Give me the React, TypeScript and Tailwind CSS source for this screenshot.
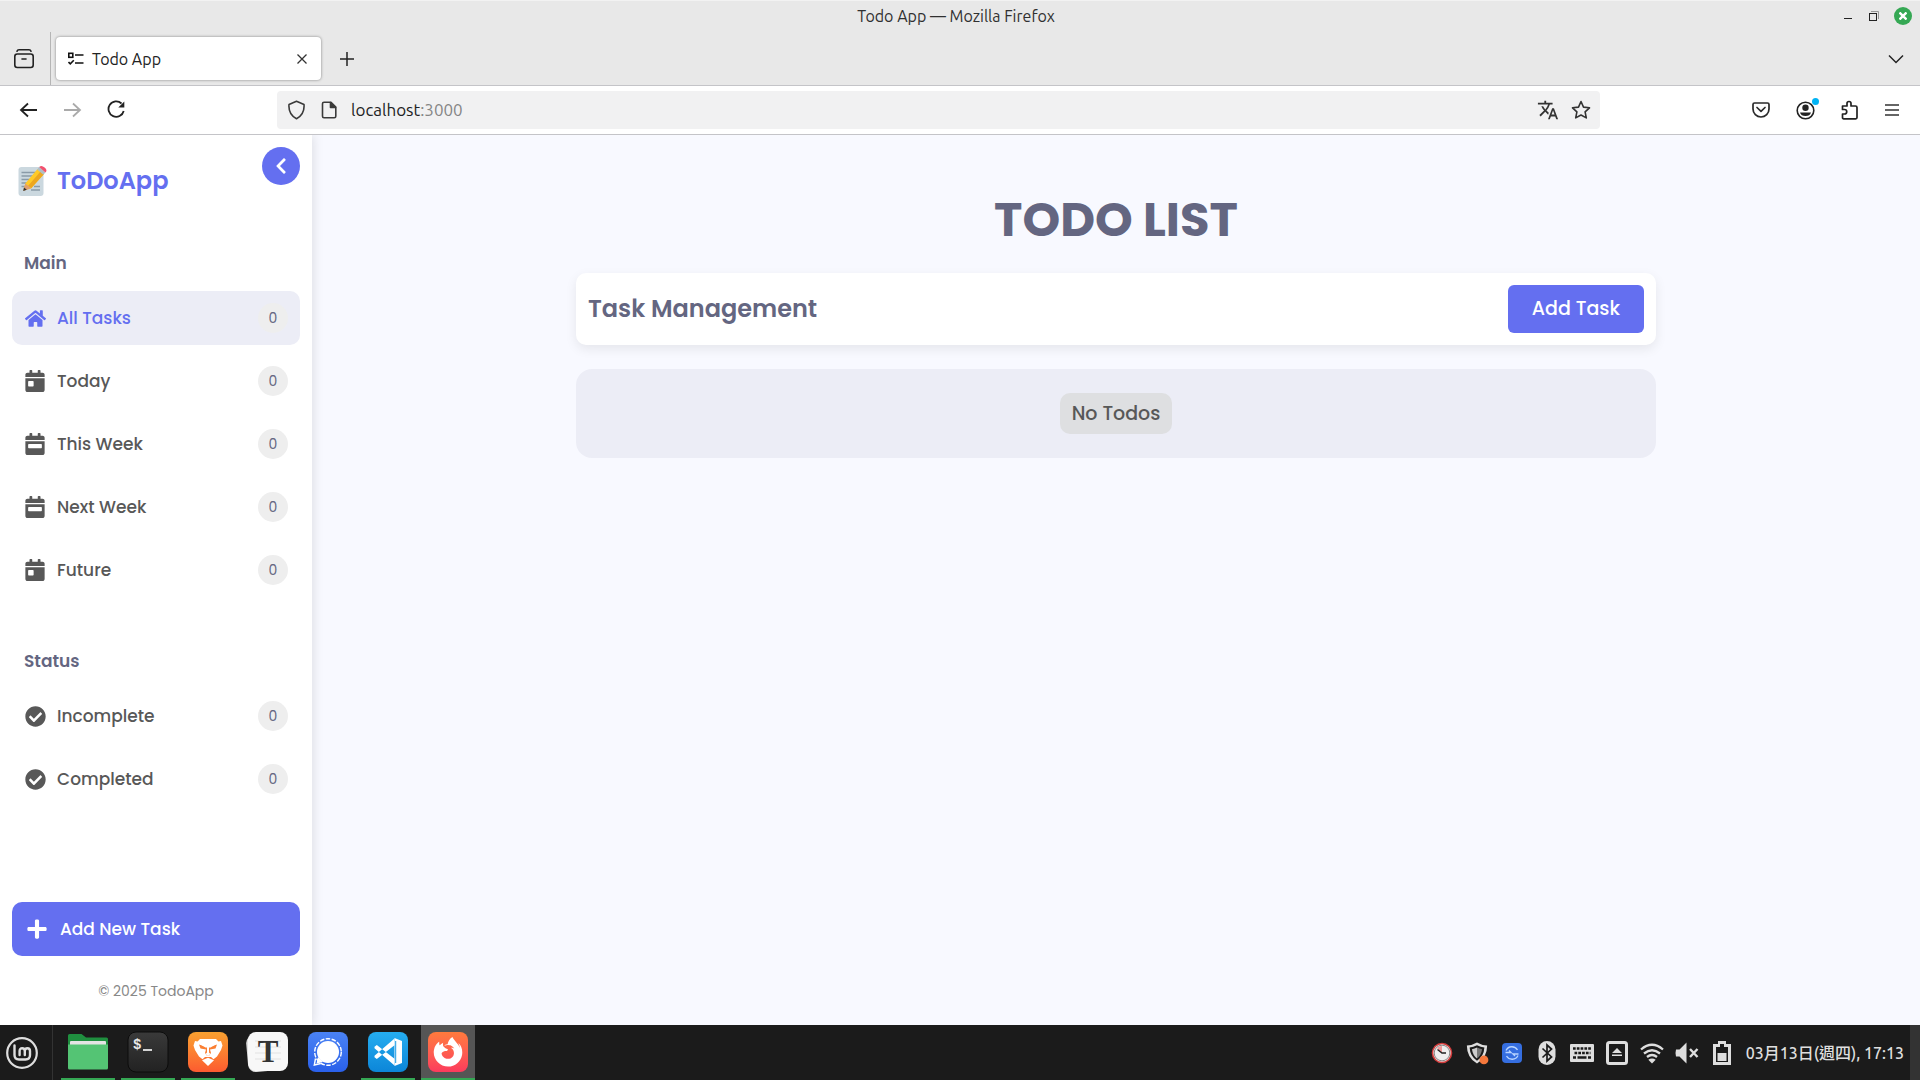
import type { ReactNode } from "react";
import {
  FaCalendarDay,
  FaCalendarWeek,
  FaCheckCircle,
  FaChevronLeft,
  FaFirefoxBrowser,
  FaHome,
  FaPlus,
} from "react-icons/fa";
import { MdTranslate } from "react-icons/md";

/* ---------- window chrome ---------- */

function TitleBar() {
  return (
    <div className="flex h-8 items-center border-t border-[#f2f2f2] bg-[#e8e8e8] pb-[2px] pr-2">
      <div className="flex-1" />
      <h2 className="text-[16px] leading-5 text-[#303030]">Todo App — Mozilla Firefox</h2>
      <div className="flex flex-1 items-center justify-end gap-[14px]">
        <button aria-label="Minimize" className="flex h-4 w-3 items-center justify-center">
          <svg width="10" height="10" className="fill-[#222]">
            <rect x="1" y="7" width="8" height="1" />
          </svg>
        </button>
        <button aria-label="Restore" className="flex h-4 w-3 items-center justify-center">
          <svg width="12" height="12" fill="none">
            <path d="M3 1.5h7.5V9" stroke="#999" />
            <rect x="1.5" y="3.5" width="7" height="7" stroke="#222" />
          </svg>
        </button>
        <button
          aria-label="Close window"
          className="flex size-[18px] items-center justify-center rounded-full bg-[#35a854]"
        >
          <svg width="8" height="8" stroke="#fff" strokeWidth="2.4">
            <path d="M0.5 0.5l7 7M7.5 0.5l-7 7" />
          </svg>
        </button>
      </div>
    </div>
  );
}

function TabStrip() {
  return (
    <div className="flex h-[54px] border-b border-[#c4c4c8] bg-[#e8e8e8]">
      <div className="flex w-[51px] items-center border-r border-[#b5b5b5] pl-[13px]">
        <button aria-label="Recent browsing">
          <svg width="22" height="22" fill="none" stroke="#222" strokeWidth="1.6" strokeLinecap="round">
            <path d="M4 3.2C4.400 2 5 1.800 6 1.800h10c1 0 1.600.2 2 1.400" />
            <rect x="1.800" y="6" width="18.400" height="13.500" rx="2.500" />
            <path d="M9 11h4" />
          </svg>
        </button>
      </div>
      <div className="ml-[5px] mt-[5px] flex h-[43px] w-[265px] items-center rounded bg-white pl-3 pr-[11px] shadow-[0_0_3px_rgba(0,0,0,0.45)]">
        <svg width="16" height="16" fill="none" stroke="#111" strokeWidth="1.600">
          <rect x="0.800" y="2.300" width="4" height="4" />
          <path d="M7 4h8.500M7 12h8.500M0.500 11l1.800 1.800L5.800 9.300" />
        </svg>
        <span className="ml-2 flex-1 text-[16px] leading-5 text-[#222]">Todo App</span>
        <button aria-label="Close tab" className="flex size-4 items-center justify-center">
          <svg width="10" height="10" stroke="#333" strokeWidth="1.300">
            <path d="M0.500 0.500l9 9M9.500 0.500l-9 9" />
          </svg>
        </button>
      </div>
      <button aria-label="New tab" className="ml-[18px] flex items-center">
        <svg width="16" height="16" stroke="#222" strokeWidth="1.500">
          <path d="M8 1v14M1 8h14" />
        </svg>
      </button>
      <button aria-label="List all tabs" className="ml-auto mr-4 flex items-center">
        <svg width="16" height="10" fill="none" stroke="#222" strokeWidth="1.500">
          <path d="M1 1.500l7 7 7-7" />
        </svg>
      </button>
    </div>
  );
}

function Toolbar() {
  return (
    <div className="flex h-[49px] items-center border-b border-[#c4c4c8] bg-white pl-[19px] pr-5">
      <div className="flex w-[258px] items-center gap-6">
        <button aria-label="Back">
          <svg width="20" height="20" fill="none" stroke="#222" strokeWidth="1.800">
            <path d="M18 10H2M9 3.500L2 10l7 6.500" />
          </svg>
        </button>
        <button aria-label="Forward">
          <svg width="20" height="20" fill="none" stroke="#aaa" strokeWidth="1.800">
            <path d="M1 10h16M10 3.500l7 6.500-7 6.500" />
          </svg>
        </button>
        <button aria-label="Reload">
          <svg width="20" height="20" fill="none" stroke="#222" strokeWidth="1.800">
            <path d="M14.500 3.500A7.700 7.700 0 1 0 16.700 11" />
            <path d="M17.300 1.500V7.500h-6z" fill="#222" stroke="none" />
          </svg>
        </button>
      </div>
      <div className="flex h-[38px] flex-1 items-center rounded bg-[#f1f1f2] pl-[10px] pr-[9px]">
        <svg width="18" height="20" fill="none" stroke="#3a3a3a" strokeWidth="1.600" strokeLinejoin="round">
          <path d="M9.500 1.300l7.500 3.200c.5 6-1.500 11-7.500 14.200C3.500 15.500 1.500 10.500 2 4.500z" />
        </svg>
        <svg width="16" height="18" fill="none" stroke="#3a3a3a" strokeWidth="1.600" strokeLinejoin="round" className="ml-4">
          <path d="M3 1.200h7L14.800 6v9.300q0 1.500-1.500 1.500H3q-1.500 0-1.500-1.500V2.700Q1.500 1.200 3 1.200z" />
          <path d="M9.500 1.500v5h5z" fill="#3a3a3a" />
        </svg>
        <label htmlFor="address" className="ml-[14px] flex text-[17px] leading-6 text-[#222]">
          localhost<span className="text-[#858585]">:3000</span>
        </label>
        <input id="address" aria-label="Address" className="h-6 min-w-0 flex-1 bg-transparent text-[17px] outline-none" />
        <button aria-label="Translate page">
          <MdTranslate className="size-[22px] text-[#333]" />
        </button>
        <button aria-label="Bookmark page" className="ml-3">
          <svg width="20" height="20" fill="none" stroke="#333" strokeWidth="1.600" strokeLinejoin="round">
            <path d="M10 1.500l2.500 5.600 6 .7-4.400 4.100 1.200 6L10 15l-5.300 2.900 1.200-6L1.500 7.800l6-.7z" />
          </svg>
        </button>
      </div>
      <div className="ml-[151px] flex items-center gap-[25px]">
        <button aria-label="Save to Pocket">
          <svg width="20" height="20" fill="none" stroke="#2a2a2a" strokeWidth="1.700" strokeLinecap="round" strokeLinejoin="round">
            <path d="M3.500 3h13q1.500 0 1.500 1.500V9a8 8 0 0 1-16 0V4.500Q2 3 3.500 3z" />
            <path d="M6 7.500l4 3.800 4-3.800" />
          </svg>
        </button>
        <button aria-label="Account" className="relative">
          <svg width="20" height="20" fill="none">
            <circle cx="9.500" cy="10.500" r="8.300" stroke="#222" strokeWidth="1.600" />
            <circle cx="9.500" cy="7.800" r="3.200" fill="#222" />
            <path d="M4 12.500h11q-1 3.500-5.500 3.500t-5.500-3.500z" fill="#222" />
          </svg>
          <span className="absolute -right-[3px] -top-[2px] size-[7px] rounded-full bg-[#00b3f4]" />
        </button>
        <button aria-label="Extensions">
          <svg width="18" height="20" fill="none" stroke="#222" strokeWidth="1.700" strokeLinejoin="round">
            <path d="M1.500 6H6V3.500a2 2 0 0 1 4 0V6h4.500Q16 6 16 7.500v10q0 1.300-1.300 1.300H2.800Q1.500 18.800 1.500 17.500V14h2a2 2 0 0 0 0-4.500h-2z" />
          </svg>
        </button>
        <button aria-label="Application menu">
          <svg width="16" height="16" stroke="#333" strokeWidth="1.600">
            <path d="M1 3h14M1 8h14M1 13h14" />
          </svg>
        </button>
      </div>
    </div>
  );
}

/* ---------- todo app ---------- */

function MemoIcon() {
  return (
    <svg width="29" height="32" viewBox="0 0 29 32" aria-hidden="true">
      <rect x="0.500" y="2" width="25" height="29" rx="3" fill="#cbd8df" />
      <path d="M3.500 7.500h15M3.500 11h13M3.500 14.500h10M3.500 18h7M3.500 21.500h4M16 21.500h6M13 25h9" stroke="#8a9ba8" strokeWidth="1.300" />
      <path d="M5.500 25.500l1.800-7L19.500 4l6.300 5.300-12.600 14z" fill="#ffca28" />
      <path d="M22.500 6.500l3.300 2.800-12.600 14-3-2.600z" fill="#eda71f" />
      <path d="M7.300 18.500l5.900 4.800-8 2.700z" fill="#e0a070" />
      <path d="M6 22.500l2.800 2.200-3.600 1.300z" fill="#333" />
      <path d="M19.200 4.400l2-2.300 6.200 5.300-2 2.300z" fill="#b0bec5" />
      <path d="M21.200 2.100q2.200-2.500 5.400.4 3.300 2.700.8 4.900z" fill="#f2516e" />
    </svg>
  );
}

type Item = { label: string; icon: ReactNode; active?: boolean };

const mainItems: Item[] = [
  { label: "All Tasks", icon: <FaHome size={21} />, active: true },
  { label: "Today", icon: <FaCalendarDay size={22} /> },
  { label: "This Week", icon: <FaCalendarWeek size={22} /> },
  { label: "Next Week", icon: <FaCalendarWeek size={22} /> },
  { label: "Future", icon: <FaCalendarDay size={22} /> },
];

const statusItems: Item[] = [
  { label: "Incomplete", icon: <FaCheckCircle size={21} /> },
  { label: "Completed", icon: <FaCheckCircle size={21} /> },
];

function NavGroup({ title, items }: { title: string; items: Item[] }) {
  return (
    <section className="mt-[52px]">
      <h3 className="mb-4 px-3 text-[17px] font-semibold leading-6 text-[#646681]">{title}</h3>
      <ul className="flex flex-col gap-[9px]">
        {items.map(({ label, icon, active }) => (
          <li key={label}>
            <a
              href="#"
              className={
                active
                  ? "flex h-[54px] items-center rounded-[10px] bg-[#ecedf6] px-3 text-[#646ff0]"
                  : "flex h-[54px] items-center rounded-[10px] px-3 text-[#585858]"
              }
            >
              <span className="flex w-[22px] justify-center">{icon}</span>
              <span className="ml-[11px] flex-1 text-[17px] font-medium leading-6">{label}</span>
              <span className="flex size-[30px] items-center justify-center rounded-full bg-[#eeeeee] text-[14px] text-[#646681]">
                0
              </span>
            </a>
          </li>
        ))}
      </ul>
    </section>
  );
}

function Sidebar() {
  return (
    <aside className="relative z-10 flex w-[312px] shrink-0 flex-col bg-white px-3 pb-6 pt-7 shadow-[2px_0_10px_rgba(0,0,0,0.1)]">
      <button
        aria-label="Collapse sidebar"
        className="absolute right-3 top-3 flex size-[38px] items-center justify-center rounded-full bg-[#646ff0] text-white"
      >
        <FaChevronLeft size={18} />
      </button>
      <div className="flex h-9 items-center gap-[10px] px-[6px]">
        <MemoIcon />
        <h1 className="text-[24px] font-semibold leading-9 text-[#646ff0]">ToDoApp</h1>
      </div>
      <nav>
        <NavGroup title="Main" items={mainItems} />
        <NavGroup title="Status" items={statusItems} />
      </nav>
      <button className="mt-auto flex h-[54px] items-center rounded-[10px] bg-[#646ff0] pl-[14px] text-white">
        <FaPlus size={22} />
        <span className="ml-3 text-[17px] font-medium leading-6">Add New Task</span>
      </button>
      <p className="mt-[25px] text-center text-[14px] leading-5 text-[#888]">© 2025 TodoApp</p>
    </aside>
  );
}

function TodoPage() {
  return (
    <main className="flex-1 bg-[#f8f9ff] px-6 pt-[49px]">
      <div className="mx-auto max-w-[1080px]">
        <h1 className="mb-[17px] text-center text-[48px] font-bold leading-[72px] text-[#646681]">TODO LIST</h1>
        <div className="flex items-center justify-between rounded-[10px] bg-white p-3 shadow-[0_4px_12px_rgba(0,0,0,0.08)]">
          <h2 className="text-[24px] font-semibold leading-9 text-[#646681]">Task Management</h2>
          <button className="h-12 rounded-md bg-[#646ff0] px-6 text-[19px] font-medium leading-6 text-white">Add Task</button>
        </div>
        <div className="mt-6 flex justify-center rounded-2xl bg-[#ecedf6] py-6">
          <p className="rounded-[10px] bg-[#dedfe1] px-3 py-2 text-[19px] font-medium leading-[25px] text-[#585858]">No Todos</p>
        </div>
      </div>
    </main>
  );
}

/* ---------- desktop panel ---------- */

function FolderIcon() {
  return (
    <svg width="40" height="40" viewBox="0 0 40 40">
      <path d="M0 3.500q0-1.500 1.500-1.500h12L18 5.500h20.500Q40 5.500 40 7V20H0z" fill="#1f8f3f" />
      <rect x="2" y="9" width="36" height="6" rx="1" fill="#e4e4e4" />
      <path d="M0 12.500h40V36q0 1.500-1.500 1.500h-37Q0 37.500 0 36z" fill="#54c474" />
    </svg>
  );
}

function TerminalIcon() {
  return (
    <svg width="42" height="42" viewBox="0 0 42 42">
      <defs>
        <linearGradient id="term" x1="0" y1="0" x2="0" y2="1">
          <stop offset="0" stopColor="#3a3a3a" />
          <stop offset="1" stopColor="#222" />
        </linearGradient>
      </defs>
      <rect x="1" y="1" width="40" height="40" rx="8" fill="url(#term)" stroke="#0c0c0c" />
      <text x="6" y="18" fontFamily="Liberation Mono" fontWeight="bold" fontSize="14" fill="#e8e8e8">
        $
      </text>
      <path d="M16 19h9" stroke="#e8e8e8" strokeWidth="1.800" />
    </svg>
  );
}

function BraveIcon() {
  return (
    <div className="flex size-10 items-center justify-center rounded-lg bg-linear-to-b from-[#f8a030] to-[#fc5a30]">
      <svg width="30" height="30" viewBox="0 0 30 30">
        <path d="M7 2h16l2.500 2.500L28 4l1.500 4.500L28 13l-4 6.500-3.500 2.800L18 20h-6l-2.500 2.300L6 19.500 2 13 .5 8.500 2 4l2.500.5z" fill="#fff" />
        <path d="M6 7.500l6 1.800 3-1 3 1 6-1.800-1.500 4-5.500 1L18 16l-1.800 2.500h-2.400L12 16l1-3.500-5.500-1z" fill="#fb7f32" />
        <path d="M6 6.800l5 1h8l5-1-6.500 3.700h-5z" fill="#fff" />
        <path d="M14 9h2v6.500l1.500 1.500L15 19l-2.500-2 1.500-1.500z" fill="#fff" />
        <path d="M9 23.300l6-2.500 6 2.500-6 5.700z" fill="#fff" />
      </svg>
    </div>
  );
}

function TyporaIcon() {
  return (
    <svg width="44" height="42" viewBox="0 0 44 42">
      <rect x="1" y="3" width="38" height="37" rx="8" fill="#dcdcdc" transform="rotate(-5 21 21)" />
      <rect x="2" y="1" width="40" height="39" rx="8" fill="#f8f8f8" />
      <path d="M9 10h26M9 16h26M9 22h26M9 28h26" stroke="#e2e2e2" />
      <text x="22" y="31" textAnchor="middle" fontFamily="Liberation Serif" fontWeight="bold" fontSize="31" fill="#333">
        T
      </text>
    </svg>
  );
}

function SignalIcon() {
  return (
    <div className="flex size-10 items-center justify-center rounded-lg bg-linear-to-b from-[#4a82f4] to-[#2a60ea]">
      <svg width="30" height="30" viewBox="0 0 30 30">
        <circle cx="15" cy="15" r="11" fill="#fff" />
        <path d="M5 20l-1.500 6.500L10 25z" fill="#fff" />
        <circle cx="15" cy="15" r="13.300" fill="none" stroke="#fff" strokeWidth="1.400" strokeDasharray="4.500 1.500" />
        <path d="M2.500 21.500L1.300 28l6.500-1.500" fill="none" stroke="#fff" strokeWidth="1.400" />
      </svg>
    </div>
  );
}

function CodeIcon() {
  return (
    <div className="flex size-10 items-center justify-center rounded-lg bg-linear-to-b from-[#25adf0] to-[#0c86d8]">
      <svg width="30" height="30" viewBox="0 0 30 30">
        <path d="M21.500 1.500v6.800L3.800 22 1.500 20.300v-1.600zM21.500 28.500v-6.800L3.800 8 1.500 9.700v1.600z" fill="#fff" />
        <path d="M21.500 1L29 4v22l-7.500 3z" fill="#fff" />
        <path d="M22.700 4v22" stroke="#199be4" strokeWidth="1" />
      </svg>
    </div>
  );
}

function FirefoxIcon() {
  return (
    <div className="flex size-10 items-center justify-center rounded-lg bg-linear-to-b from-[#ff7a3c] to-[#fc3a5c] text-white">
      <FaFirefoxBrowser size={30} />
    </div>
  );
}

const launchers = [
  { name: "Files", icon: <FolderIcon />, running: true },
  { name: "Terminal", icon: <TerminalIcon />, running: true },
  { name: "Brave", icon: <BraveIcon />, running: true },
  { name: "Typora", icon: <TyporaIcon />, running: false },
  { name: "Signal", icon: <SignalIcon />, running: false },
  { name: "Visual Studio Code", icon: <CodeIcon />, running: true },
  { name: "Firefox", icon: <FirefoxIcon />, running: true, focused: true },
];

const trayIcons: { name: string; icon: ReactNode }[] = [
  {
    name: "Timer",
    icon: (
      <svg width="22" height="22" viewBox="0 0 22 22">
        <circle cx="11" cy="11" r="9.500" fill="#eee" stroke="#d23c3c" strokeWidth="1.600" />
        <circle cx="11" cy="11" r="7.800" fill="none" stroke="#888" strokeWidth="1" />
        <path d="M11 11V4A7 7 0 0 0 6 6z" fill="#f29a9a" />
        <path d="M6.500 7.500L11 11h4" fill="none" stroke="#222" strokeWidth="1.500" />
      </svg>
    ),
  },
  {
    name: "Updates",
    icon: (
      <svg width="26" height="26" viewBox="0 0 26 26">
        <path d="M13 1.500q5 3 11 3.300Q24 18 13 24.500 2 18 2 4.800 8 4.500 13 1.500z" fill="#dedede" />
        <path d="M13 4.500q4 2.200 8 2.600Q20.500 16.500 13 21.500 5.500 16.500 5 7.100q4-.4 8-2.600z" fill="#1b1b1b" />
        <path d="M13 7q2.500 1.300 5.500 1.900Q17.500 15.500 13 19z" fill="#777" />
        <path d="M13 7q-2.500 1.300-5.500 1.900Q8.500 15.500 13 19z" fill="#ccc" />
        <circle cx="20.500" cy="20.500" r="4.800" fill="#f5783c" />
      </svg>
    ),
  },
  {
    name: "Sync",
    icon: (
      <svg width="20" height="20" viewBox="0 0 20 20" fill="none">
        <rect width="20" height="20" rx="4" fill="#356ee0" />
        <path d="M15.500 7A6.500 6.500 0 0 0 4 7.500M4.500 13A6.500 6.500 0 0 0 16 12.500M3.500 9.500H9L7 7.500M16.500 11H11l2 2" stroke="#b8d4ff" strokeWidth="1.300" />
      </svg>
    ),
  },
  {
    name: "Bluetooth",
    icon: (
      <svg width="18" height="24" viewBox="0 0 18 24">
        <rect x="0.500" width="17" height="24" rx="8.500" fill="#dedede" />
        <path d="M4.500 7.500l9 8.500L9 20V4l4.500 4-9 8.500" fill="none" stroke="#1b1b1b" strokeWidth="1.700" />
      </svg>
    ),
  },
  {
    name: "Keyboard",
    icon: (
      <svg width="24" height="18" viewBox="0 0 24 18">
        <rect width="24" height="18" rx="1" fill="#dedede" />
        <path d="M3 4.500h18M4.500 9h16" stroke="#1b1b1b" strokeWidth="2.600" strokeDasharray="2.700 1.100" />
        <path d="M3 13.500h3M7.500 13.500h9M18 13.500h3" stroke="#1b1b1b" strokeWidth="2.600" />
      </svg>
    ),
  },
  {
    name: "Removable drives",
    icon: (
      <svg width="22" height="24" viewBox="0 0 22 24">
        <rect x="1.500" y="1.500" width="19" height="21" rx="2" fill="none" stroke="#dedede" strokeWidth="3" />
        <path d="M11 7l5 5H6zM6 13.500h10v1.500H6z" fill="#dedede" />
      </svg>
    ),
  },
  {
    name: "Wi-Fi",
    icon: (
      <svg width="24" height="22" viewBox="0 0 24 22" fill="none" stroke="#dedede" strokeWidth="2.300">
        <path d="M1 7.500Q12-2 23 7.500M4 11.500q8-6.500 16 0M7 15q5-4 10 0" />
        <path d="M12 21.500L8.300 17.800q3.700-2.500 7.400 0z" fill="#dedede" stroke="none" />
      </svg>
    ),
  },
  {
    name: "Muted",
    icon: (
      <svg width="24" height="22" viewBox="0 0 24 22">
        <path d="M1 7.500h3.500L11.500 0.500v21L4.500 14.500H1Q0 11 1 7.500z" fill="#dedede" />
        <path d="M15 7l7.500 8M22.500 7L15 15" stroke="#dedede" strokeWidth="2.400" />
      </svg>
    ),
  },
  {
    name: "Battery",
    icon: (
      <svg width="18" height="24" viewBox="0 0 18 24">
        <path d="M5 0h8v3h5v21H0V3h5z" fill="#dedede" />
        <path d="M7 3h4v3h4v15H3V6h4z" fill="#1b1b1b" />
        <rect x="4.500" y="12" width="9" height="8" fill="#dedede" />
      </svg>
    ),
  },
];

function Panel() {
  return (
    <footer className="flex h-[55px] shrink-0 bg-[#1b1b1b]">
      <button aria-label="Menu" className="flex w-[53px] items-center border-r border-[#333] pl-[6px]">
        <svg width="32" height="32" viewBox="0 0 32 32" fill="none" stroke="#dedede" strokeLinecap="round">
          <circle cx="16" cy="16" r="14.800" strokeWidth="2.200" />
          <path
            d="M8.500 8.500V18q0 4.500 4.500 4.500h6.500q4.500 0 4.500-4.500v-4q0-2.700-2.600-2.700T18.800 14v4M18.800 14q0-2.700-2.600-2.700T13.600 14v4"
            strokeWidth="2.400"
          />
        </svg>
      </button>
      <div className="ml-2 flex gap-[6px]">
        {launchers.map(({ name, icon, running, focused }) => (
          <button
            key={name}
            aria-label={name}
            className={
              focused
                ? "flex w-[54px] items-center justify-center border-b-2 border-[#35a854] bg-[#555]"
                : running
                  ? "flex w-[54px] items-center justify-center border-b-2 border-[#35a854]"
                  : "flex w-[54px] items-center justify-center border-b-2 border-transparent"
            }
          >
            {icon}
          </button>
        ))}
      </div>
      <div className="ml-auto flex items-center gap-[11px]">
        {trayIcons.map(({ name, icon }) => (
          <button key={name} aria-label={name} className="flex w-6 justify-center">
            {icon}
          </button>
        ))}
      </div>
      <time className="ml-3 self-center text-[16px] font-medium leading-5 text-[#dedede]">03月13日(週四), 17:13</time>
      <button aria-label="Show desktop" className="ml-[6px] w-[10px] bg-[#333]" />
    </footer>
  );
}

export default function App() {
  return (
    <div className="flex min-h-screen flex-col bg-white font-['Ubuntu','Noto_Sans','Noto_Sans_CJK_TC',sans-serif]">
      <header>
        <TitleBar />
        <TabStrip />
        <Toolbar />
      </header>
      <div className="flex flex-1 overflow-hidden font-['Poppins','Inter',sans-serif]">
        <Sidebar />
        <TodoPage />
      </div>
      <Panel />
    </div>
  );
}
